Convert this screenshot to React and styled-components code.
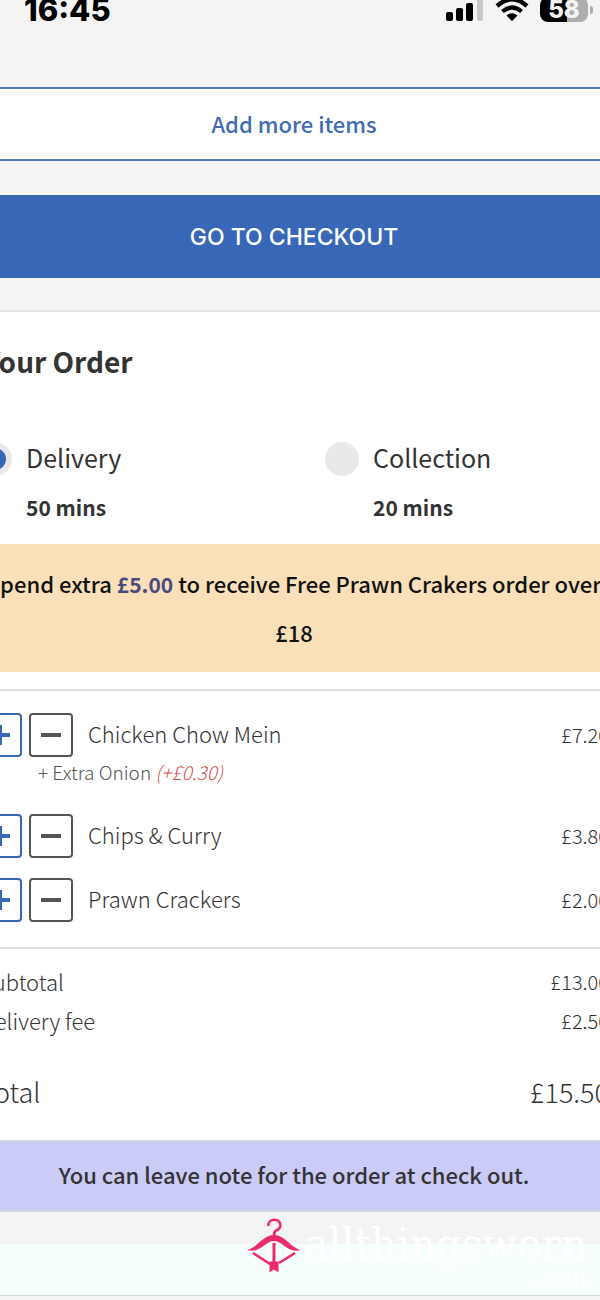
import styled, { createGlobalStyle } from 'styled-components';
import { useState } from 'react';

const sans = '"Noto Sans CJK SC", "Noto Sans", sans-serif';

const items = [
  { id: 1, name: 'Chicken Chow Mein', price: '£7.20', extra: '+ Extra Onion', extraPrice: '(+£0.30)' },
  { id: 2, name: 'Chips & Curry', price: '£3.80' },
  { id: 3, name: 'Prawn Crackers', price: '£2.00' },
];

function StatusBar() {
  return (
    <Status>
      <Time>16:45</Time>
      <StatusIcons>
        <svg width="38" height="26" viewBox="0 0 38 26">
          <rect x="0" y="15" width="7" height="9" rx="2" />
          <rect x="10" y="11" width="7" height="13" rx="2" />
          <rect x="20" y="6" width="7" height="18" rx="2" />
          <rect x="31" y="0" width="6" height="24" rx="2" fill="#c8c8c8" />
        </svg>
        <svg width="34" height="26" viewBox="0 0 34 26">
          <path d="M17 24 L11.500 18.500 Q17 14 22.500 18.500 Z" />
          <path d="M7.500 14.500 Q17 6.500 26.500 14.500" fill="none" stroke="#000" strokeWidth="4.200" />
          <path d="M2 9 Q17 -4.500 32 9" fill="none" stroke="#000" strokeWidth="4.400" />
        </svg>
        <Battery>
          <Level>58</Level>
          <Tip />
        </Battery>
      </StatusIcons>
    </Status>
  );
}

function Item({ item }) {
  return (
    <ItemBlock>
      <ItemRow>
        <QtyButton aria-label={'Add one ' + item.name} color='#3867b8'>
          <svg width="20" height="20" viewBox="0 0 20 20">
            <path d="M0 10H20M10 0V20" stroke="currentColor" strokeWidth="4" />
          </svg>
        </QtyButton>
        <QtyButton aria-label={'Remove one ' + item.name} color='#555'>
          <svg width="20" height="20" viewBox="0 0 20 20">
            <path d="M0 10H20" stroke="currentColor" strokeWidth="4" />
          </svg>
        </QtyButton>
        <ItemName>{item.name}</ItemName>
        <Price>{item.price}</Price>
      </ItemRow>
      {item.extra && <Extra>{item.extra} <em>{item.extraPrice}</em></Extra>}
    </ItemBlock>
  );
}

function App() {
  const [method, setMethod] = useState('delivery');

  function handleMethod(event) {
    setMethod(event.target.value);
  }

  return (
    <Page>
      <GlobalStyle />
      <StatusBar />
      <Bleed>
        <AddButton>Add more items</AddButton>
        <CheckoutButton>GO TO CHECKOUT</CheckoutButton>
        <Sheet>
          <Title>Your Order</Title>
          <Methods>
            <Method>
              <Radio name='method' value='delivery' checked={method === 'delivery'} onChange={handleMethod} />
              <MethodName>Delivery</MethodName>
              <MethodTime>50 mins</MethodTime>
            </Method>
            <Method>
              <Radio name='method' value='collection' checked={method === 'collection'} onChange={handleMethod} />
              <MethodName>Collection</MethodName>
              <MethodTime>20 mins</MethodTime>
            </Method>
          </Methods>
          <Offer>Spend extra <strong>£5.00</strong> to receive Free Prawn Crakers order over £18</Offer>
          <Items>
            {items.map((item) => <Item key={item.id} item={item} />)}
          </Items>
          <Totals>
            <TotalRow><span>Subtotal</span><Price>£13.00</Price></TotalRow>
            <TotalRow><span>Delivery fee</span><Price>£2.50</Price></TotalRow>
            <GrandTotal><span>Total</span><span>£15.50</span></GrandTotal>
          </Totals>
          <Note>You can leave note for the order at check out.</Note>
        </Sheet>
      </Bleed>
      <Footer>
        <Band />
        <Watermark>
          <svg width="54" height="56" viewBox="0 0 54 56">
            <g fill="none" stroke="#ee2a68" strokeWidth="2.600">
              <path d="M21.500 8 A6 5.500 0 1 1 29 12.500 Q27 13.500 27 18" />
              <path d="M27 25V46" strokeWidth="3" />
              <path d="M6 35L23 46M48 35L32 45" />
            </g>
            <path d="M0 32 C10 30 16 17 27 17 C38 17 44 30 54 32 C41 36 36 23 27 23 C18 23 13 36 0 32Z" fill="#ee2a68" />
            <path d="M22.500 43.500H31.500V54.500L27 51.500L22.500 54.500Z" fill="#ee2a68" />
          </svg>
          <Brand>allthingsworn<small>.com</small></Brand>
        </Watermark>
      </Footer>
    </Page>
  );
}

const GlobalStyle = createGlobalStyle`
  * {
    box-sizing: border-box;
  }

  body {
    margin: 0;
    background-color: #f4f4f4;
    overflow-x: hidden;
  }
`;

const Page = styled.div`
  overflow: hidden;
  color: #333;
  font-family: ${sans};
  font-size: 22px;
  line-height: 32px;
`;

const Status = styled.header`
  display: flex;
  justify-content: space-between;
  align-items: flex-start;
  height: 87px;
  padding: 0 7px 0 24px;
  color: black;
`;

const Time = styled.div`
  margin-top: -10px;
  font-family: Inter, sans-serif;
  font-size: 31px;
  font-weight: 800;
  line-height: 40px;
`;

const StatusIcons = styled.div`
  display: flex;
  align-items: flex-start;
  gap: 11px;
  margin-top: -3px;
`;

const Battery = styled.div`
  display: flex;
  align-items: center;
  gap: 2px;
`;

const Level = styled.div`
  width: 48px;
  border-radius: 8px;
  background: linear-gradient(to right, black 56%, #adadad 56%);
  color: #f4f4f4;
  font-family: Inter, sans-serif;
  font-size: 24px;
  font-weight: 800;
  line-height: 25px;
  text-align: center;
`;

const Tip = styled.div`
  width: 3px;
  height: 8px;
  border-radius: 0 4px 4px 0;
  background-color: #adadad;
`;

const Bleed = styled.main`
  margin: 0 -12px 0 -24px;
`;

const Button = styled.button`
  display: block;
  width: 100%;
  margin: 0;
  cursor: pointer;
`;

const AddButton = styled(Button)`
  height: 74px;
  padding: 0 0 2px;
  border: 2px solid #4f79b3;
  background-color: white;
  color: #416cb0;
  font-family: ${sans};
  font-size: 22px;
  font-weight: 500;
`;

const CheckoutButton = styled(Button)`
  height: 83px;
  margin: 34px 0 32px;
  border: none;
  background-color: #3867b8;
  color: white;
  font-family: Inter, sans-serif;
  font-size: 23px;
  font-weight: 500;
`;

const Sheet = styled.section`
  border-top: 2px solid #e4e4e4;
  background-color: white;
`;

const Title = styled.h1`
  margin: 0;
  padding: 29px 8px 0;
  font-size: 28px;
  font-weight: 700;
  line-height: 40px;
`;

const Methods = styled.div`
  display: grid;
  grid-template-columns: 55% 45%;
  padding: 61px 3px 21px 2px;
`;

const Method = styled.label`
  display: grid;
  grid-template-columns: 34px 1fr;
  column-gap: 14px;
  row-gap: 15px;
  align-items: center;
  cursor: pointer;
`;

const Radio = styled.input.attrs({ type: 'radio' })`
  appearance: none;
  width: 34px;
  height: 34px;
  margin: 0;
  border: 6px solid #e9e9e9;
  border-radius: 50%;
  background-color: #e9e9e9;

  &:checked {
    background-color: #3867b8;
  }
`;

const MethodName = styled.span`
  padding-bottom: 4px;
  font-size: 25px;
  font-weight: 400;
  line-height: 30px;
`;

const MethodTime = styled.span`
  grid-column: 2;
  font-size: 21px;
  font-weight: 700;
  line-height: 32px;
`;

const Offer = styled.p`
  margin: 0;
  padding: 15px 8px 16px;
  background-color: #f9e0b9;
  color: #111;
  font-weight: 500;
  line-height: 48px;
  text-align: center;

  strong {
    color: #4a4a80;
    font-size: 21px;
    font-weight: 700;
  }
`;

const Items = styled.div`
  display: flex;
  flex-direction: column;
  gap: 20px;
  margin-top: 17px;
  padding: 22px 3px 25px 2px;
  border-top: 2px solid #dedede;
  border-bottom: 2px solid #dedede;
`;

const ItemBlock = styled.div`
  font-weight: 300;
`;

const ItemRow = styled.div`
  display: flex;
  align-items: center;
  gap: 7px;
`;

const QtyButton = styled.button`
  display: flex;
  justify-content: center;
  align-items: center;
  width: 44px;
  height: 44px;
  padding: 0;
  border: 2px solid ${(props) => props.color};
  border-radius: 4px;
  background-color: white;
  color: ${(props) => props.color};
  cursor: pointer;
`;

const ItemName = styled.span`
  flex: 1;
  padding: 0 0 4px 8px;
`;

const Price = styled.span`
  font-size: 20px;
`;

const Extra = styled.div`
  padding: 0 0 8px 60px;
  color: #555;
  font-size: 19px;
  line-height: 29px;

  em {
    color: #d9534f;
  }
`;

const Totals = styled.div`
  padding: 13px 3px 26px 4px;
  font-weight: 300;
`;

const TotalRow = styled.div`
  display: flex;
  justify-content: space-between;
  line-height: 39px;
`;

const GrandTotal = styled(TotalRow)`
  padding-top: 30px;
  font-size: 27px;
  line-height: 44px;
`;

const Note = styled.p`
  margin: 0;
  padding: 16px 8px 20px;
  border-top: 2px solid #d4d4e4;
  border-bottom: 2px solid #d4d4e4;
  background-color: #cbcbf8;
  font-weight: 500;
  text-align: center;
`;

const Footer = styled.footer`
  position: relative;
  padding: 32px 0 5px;
`;

const Band = styled.div`
  height: 52px;
  border-bottom: 1px solid #d5dddd;
  background-color: #f7fffe;
`;

const Watermark = styled.div`
  position: absolute;
  top: 6px;
  right: 13px;
  display: flex;
  gap: 3px;
`;

const Brand = styled.div`
  display: flex;
  flex-direction: column;
  align-items: flex-end;
  padding-top: 2px;
  color: white;
  font-family: "DejaVu Serif Condensed", "DejaVu Serif", serif;
  font-size: 45px;
  line-height: 50px;

  small {
    font-size: 26px;
    line-height: 14px;
  }
`;

export default App;
